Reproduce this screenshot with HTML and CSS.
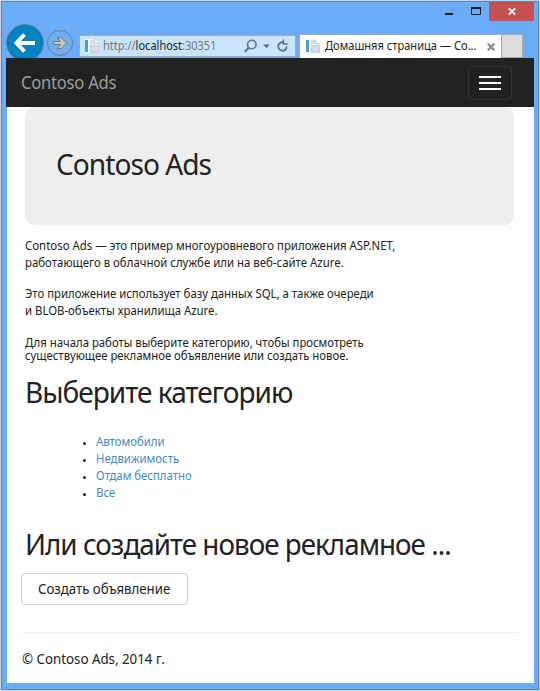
FILE: index.html
```html
<!DOCTYPE html>
<html lang="ru">
<head>
<meta charset="utf-8">
<title>Домашняя страница — Contoso Ads</title>
<link rel="stylesheet" href="styles.css">
</head>
<body>
<div class="window">
  <header class="chrome">
    <div class="titlebar">
      <svg class="min" width="8" height="2"><rect width="8" height="2" fill="#1e1e1e"/></svg>
      <svg class="max" width="10" height="8"><path d="M.5 1v6.5h9V1M0 1h10" fill="none" stroke="#1e1e1e"/><path d="M0 1h10" stroke="#1e1e1e" stroke-width="2"/></svg>
      <div class="close"><svg width="8" height="7" viewBox="0 0 8 7"><path d="M.8.3 7.2 6.700M7.200.3.8 6.700" stroke="#fff" stroke-width="1.700"/></svg></div>
    </div>
    <div class="toolbar">
      <svg class="nav-buttons" width="73" height="34" viewBox="0 0 73 34">
        <circle cx="19" cy="19" r="18.200" fill="#0083c3" stroke="#5c6f7d"/>
        <path d="M29 19H11M18.500 10.500 10.500 19l8 8.500" fill="none" stroke="#fff" stroke-width="4"/>
        <circle cx="54" cy="19" r="12.500" fill="#6fadf3" stroke="#6d7f98"/>
        <path d="M47.500 17.500h7l-3-4h3.500l5.500 5.500-5.500 5.500h-3.500l3-4h-7z" fill="#c6c6c6" stroke="#777"/>
      </svg>
      <div class="address">
        <svg class="page-icon" width="16" height="16" viewBox="0 0 16 16"><path d="M1 1h9l5 4v10H1z" fill="#f2f5f8"/><path d="M1 2h3v12H1z" fill="#4b9fce"/><path d="M6 3h5M6 5h4M7 9h7M7 11h7M7 13h7" stroke="#b9c3ce"/><path d="M10.500 1v4.500H15M6.500 7.500h8v7h-8z" fill="none" stroke="#c7ced8"/></svg>
        <span class="url"><span class="t">http://<b>localhost</b>:30351</span></span>
        <svg class="address-tools" width="44" height="14" viewBox="0 0 44 14" fill="none" stroke="#5f7384">
          <circle cx="7.800" cy="5.500" r="4.300" stroke-width="1.600"/><path d="M4.800 8.700.8 12.700" stroke-width="2.200"/>
          <path d="M19 5.500h7l-3.500 3.500z" fill="#5f7384" stroke="none"/>
          <path d="M42.800 7.500a4.300 4.300 0 1 1-2.600-4" stroke-width="1.800"/><path d="M39.300.5v4.500h4.400" stroke-width="1.500"/>
        </svg>
      </div>
      <div class="tab">
        <svg class="page-icon" width="16" height="16" viewBox="0 0 16 16"><path d="M1 1h9l5 4v10H1z" fill="#f2f5f8"/><path d="M1 2h3v12H1z" fill="#4b9fce"/><path d="M6 3h5M6 5h4M7 9h7M7 11h7M7 13h7" stroke="#b9c3ce"/><path d="M10.500 1v4.500H15M6.500 7.500h8v7h-8z" fill="none" stroke="#c7ced8"/></svg>
        <span class="tab-title"><span class="t">Домашняя страница — Co...</span></span>
        <svg class="tab-close" width="8" height="8" viewBox="0 0 8 8"><path d="m.7.7 6.600 6.600M7.300.7.7 7.300" stroke="#8b8b8b" stroke-width="2.200"/></svg>
      </div>
      <div class="new-tab"></div>
    </div>
  </header>
  <nav class="navbar">
    <span class="brand"><span class="t">Contoso Ads</span></span>
    <button class="toggle"><i></i><i></i><i></i></button>
  </nav>
  <main class="page">
    <div class="jumbotron"><h1><span class="t">Contoso Ads</span></h1></div>
    <p><span class="t">Contoso Ads — это пример многоуровневого приложения ASP.NET,</span><br><span class="t">работающего в облачной службе или на веб-сайте Azure.</span></p>
    <p class="storage"><span class="t">Это приложение использует базу данных SQL, а также очереди</span><br><span class="t">и BLOB-объекты хранилища Azure.</span></p>
    <p class="tight"><span class="t">Для начала работы выберите категорию, чтобы просмотреть</span><br><span class="t">существующее рекламное объявление или создать новое.</span></p>
    <h2><span class="t">Выберите категорию</span></h2>
    <ul>
      <li><a><span class="t">Автомобили</span></a></li>
      <li><a><span class="t">Недвижимость</span></a></li>
      <li><a><span class="t">Отдам бесплатно</span></a></li>
      <li><a><span class="t">Все</span></a></li>
    </ul>
    <h2 class="make"><span class="t">Или создайте новое рекламное ...</span></h2>
    <button class="create"><span class="t">Создать объявление</span></button>
    <footer><span class="t">© Contoso Ads, 2014 г.</span></footer>
  </main>
</div>
</body>
</html>
```
FILE: styles.css
```css
* { box-sizing: border-box; }
body { margin: 0; padding: 1px; height: 691px; background: #d4d4d4; font-family: "Noto Sans", sans-serif; color: #222; overflow: hidden; }
.window { height: 689px; border: 1px solid #4f86c2; background: #6aacf7; display: flex; flex-direction: column; padding: 0 4px 6px 4px; }
/* Condenses the text face horizontally; --fit is the width factor. */
.t { display: inline-block; transform: scaleX(var(--fit, 1)); transform-origin: 0 50%; }
.chrome { height: 56px; display: flex; flex-direction: column; }
.titlebar { height: 22px; display: flex; justify-content: flex-end; align-items: flex-start; }
.min { margin: 11px 18px 0 0; }
.max { margin: 5px 8px 0 0; }
.close { width: 45px; height: 19px; background: #c75050; display: flex; align-items: center; justify-content: center; }
.toolbar { height: 34px; display: flex; align-items: flex-end; }
.nav-buttons { flex: none; }
.address { width: 217px; height: 22px; margin-bottom: 1px; border: 1px solid #a9a9a9; background: #c9e4fd; display: flex; align-items: center; padding: 0 7px 1px 4px; }
.page-icon { flex: none; }
.url { flex: 1; min-width: 0; margin-left: 3px; font-size: 12px; line-height: 18px; color: #777; white-space: nowrap; --fit: .916; }
.url b { font-weight: 400; color: #1e1e1e; }
.address-tools { flex: none; }
.tab { width: 203px; height: 24px; margin-left: 3px; background: #fff; border: 1px solid #a9a9a9; border-bottom: 0; display: flex; align-items: center; padding: 0 6px 1px 5px; }
.tab-title { flex: 1; min-width: 0; margin-left: 4px; font-size: 12px; line-height: 18px; white-space: nowrap; color: #1e1e1e; --fit: .925; }
.tab-close { flex: none; margin-top: 2px; }
.new-tab { width: 21px; height: 24px; border: 1px solid #a9a9a9; border-left: 0; background: #dcdcdc; }
.navbar { height: 49px; background: #222; display: flex; justify-content: space-between; align-items: center; padding: 0 22px 0 15px; }
.brand { font-size: 18px; line-height: 24px; margin-top: -1px; color: #9d9d9d; white-space: nowrap; letter-spacing: -.3px; --fit: .925; }
.toggle { width: 44px; height: 34px; background: none; border: 1px solid #333; border-radius: 4px; padding: 0; display: flex; flex-direction: column; gap: 4px; align-items: center; justify-content: center; }
.toggle i { width: 22px; height: 2px; background: #fff; }
.page { flex: 1; margin-left: 1px; background: #fff; padding: 0 15px 0 18px; }
.jumbotron { width: 489px; height: 118px; border-radius: 10px; background: #eee; padding: 36px 31px; margin-bottom: 12px; }
h1, h2 { margin: 0; font-weight: 400; white-space: nowrap; letter-spacing: -1px; }
h1 { font-size: 29px; line-height: 42px; --fit: .969; }
p { margin: 0 0 14px; font-size: 12px; line-height: 17px; white-space: nowrap; --fit: .951; }
p.storage { margin-bottom: 17px; --fit: .947; }
p.tight { line-height: 13px; margin-bottom: 10px; --fit: .945; }
h2 { font-size: 29px; line-height: 40px; --fit: .966; }
h2.make { --fit: .957; }
ul { margin: 21px 0 23px; padding: 0 0 0 71px; font-size: 12px; line-height: 17px; --fit: .946; }
li::marker { font-size: 9px; }
a { color: #428bca; }
.create { display: block; margin-left: -4px; margin-top: 9px; width: 167px; height: 32px; border: 1px solid #ccc; border-radius: 4px; background: #fff; font: 14px/20px "Noto Sans", sans-serif; color: #222; padding: 0 0 1px 15.500px; text-align: left; white-space: nowrap; --fit: .945; }
footer { border-top: 1px solid #eee; margin: 27px 0 0 -3px; padding-top: 16px; font-size: 14px; line-height: 20px; --fit: .95; }
```
